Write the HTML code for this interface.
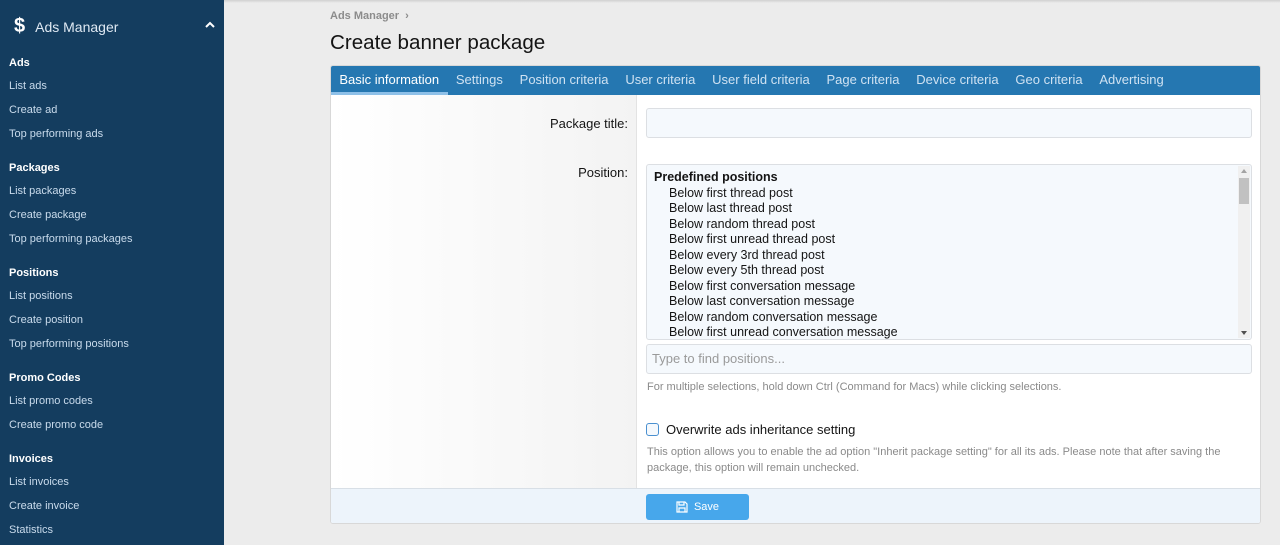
<!DOCTYPE html>
<html><head><meta charset="utf-8"><style>
*{box-sizing:border-box;margin:0;padding:0}
body{width:1280px;height:545px;overflow:hidden;background:#ececec;font-family:"Liberation Sans",sans-serif;position:relative}
.sb{position:absolute;left:0;top:0;width:224px;height:545px;background:#143d5f;color:#c5d7e8}
.sb .hd{height:53px;display:flex;align-items:center;padding-left:14px;color:#dfe9f3;font-size:14px}
.sb .hd b{font-size:20px;color:#fff;margin-right:10px;font-weight:bold}
.sb .car{position:absolute;right:9px;top:21px}
.sb .h{font-size:11px;font-weight:bold;color:#fff;padding-left:9px;height:21px;line-height:21px}
.sb .i{font-size:11px;padding-left:9px;height:24px;line-height:24px;color:#c9dbec}
.sb .gap{height:12px}
.top{position:absolute;left:224px;top:0;width:1056px;height:3px;background:linear-gradient(#d0d0d0,#ececec)}
.bc{position:absolute;left:330px;top:10px;font-size:11px;font-weight:bold;color:#8c8c8c}
h1{position:absolute;left:330px;top:31px;font-size:20.6px;font-weight:normal;color:#141414}
.blk{position:absolute;left:330px;top:65px;width:931px;height:459px;border:1px solid #d8d8d8;border-radius:3px;background:#fff;overflow:hidden}
.tabs{height:29px;background:#2577b1;display:flex;font-size:13px;color:#cfe2f2;padding-left:0}
.tabs span{padding:0 8.4px;line-height:28px}
.tabs span.a{color:#fff;border-bottom:3px solid #8ec0e8;line-height:28px}
.lc{position:absolute;left:0;top:29px;width:306px;height:394px;background:linear-gradient(90deg,#fff,#f3f3f3);border-right:1px solid #e3e3e3}
.lbl{position:absolute;right:632px;font-size:13px;color:#141414}
.inp{position:absolute;left:315px;width:606px;border:1px solid #dcdfe3;border-radius:3px;background:#f5f9fd}
.sel{position:absolute;left:315px;top:98px;width:606px;height:176px;border:1px solid #dcdfe3;border-radius:3px;background:#f5f9fd;font-size:12.5px;color:#141414;overflow:hidden}
.sel div{height:15.5px;line-height:15.5px;padding-left:22px}
.sel .g{font-weight:bold;padding-left:7px;margin-top:5px}
.scr{position:absolute;right:1px;top:1px;width:12px;height:172px;background:#f0f0f0}
.note{position:absolute;left:316px;font-size:11px;color:#8a8a8a;line-height:16px}
.ft{position:absolute;left:0;top:422px;width:100%;height:37px;background:#edf4fb;border-top:1px solid #d8dfe6}
.btn{position:absolute;left:315px;top:5px;width:103px;height:26px;background:#47a7eb;border-radius:3px;color:#fff;font-size:11px;display:flex;align-items:center;justify-content:center;gap:6px}
</style></head><body>
<div class="sb">
<div class="hd"><b>$</b>Ads Manager<svg class="car" width="10" height="8" viewBox="0 0 10 8"><path d="M1 6L5 2L9 6" stroke="#fff" stroke-width="2" fill="none"/></svg></div>
<div class="h">Ads</div><div class="i">List ads</div><div class="i">Create ad</div><div class="i">Top performing ads</div><div class="gap"></div>
<div class="h">Packages</div><div class="i">List packages</div><div class="i">Create package</div><div class="i">Top performing packages</div><div class="gap"></div>
<div class="h">Positions</div><div class="i">List positions</div><div class="i">Create position</div><div class="i">Top performing positions</div><div class="gap"></div>
<div class="h">Promo Codes</div><div class="i">List promo codes</div><div class="i">Create promo code</div><div class="gap"></div>
<div class="h">Invoices</div><div class="i">List invoices</div><div class="i">Create invoice</div><div class="i">Statistics</div>
</div>
<div class="top"></div>
<div class="bc">Ads Manager &nbsp;›</div>
<h1>Create banner package</h1>
<div class="blk">
<div class="tabs"><span class="a">Basic information</span><span>Settings</span><span>Position criteria</span><span>User criteria</span><span>User field criteria</span><span>Page criteria</span><span>Device criteria</span><span>Geo criteria</span><span>Advertising</span></div>
<div class="lc"></div>
<div class="lbl" style="top:50px">Package title:</div>
<div class="inp" style="top:42px;height:30px"></div>
<div class="lbl" style="top:99px">Position:</div>
<div class="sel"><div class="g">Predefined positions</div>
<div>Below first thread post</div><div>Below last thread post</div><div>Below random thread post</div><div>Below first unread thread post</div><div>Below every 3rd thread post</div><div>Below every 5th thread post</div><div>Below first conversation message</div><div>Below last conversation message</div><div>Below random conversation message</div><div>Below first unread conversation message</div>
<svg class="scr" width="12" height="172" viewBox="0 0 12 172"><rect width="12" height="172" fill="#f0f0f0"/><path d="M3 7h6L6 3z" fill="#a3a3a3"/><rect x="1" y="12" width="10" height="26" fill="#c1c1c1"/><path d="M3 165h6L6 169z" fill="#505050"/></svg></div>
<div class="inp" style="top:278px;height:30px;font-size:13px;color:#9a9a9a;padding:6px 5px">Type to find positions...</div>
<div class="note" style="top:313px">For multiple selections, hold down Ctrl (Command for Macs) while clicking selections.</div>
<div style="position:absolute;left:315px;top:357px;width:13px;height:13px;border:1px solid #4a90d0;border-radius:3px;background:#f5f9fd"></div>
<div style="position:absolute;left:335px;top:356px;font-size:13px;color:#141414">Overwrite ads inheritance setting</div>
<div class="note" style="top:378px">This option allows you to enable the ad option "Inherit package setting" for all its ads. Please note that after saving the<br>package, this option will remain unchecked.</div>
<div class="ft"><div class="btn"><svg width="12" height="12" viewBox="0 0 12 12"><path d="M1 1h8l2 2v8H1z M3 1v3h5V1 M3 11V7h6v4" stroke="#fff" stroke-width="1.2" fill="none"/></svg>Save</div></div>
</div>
</body></html>
